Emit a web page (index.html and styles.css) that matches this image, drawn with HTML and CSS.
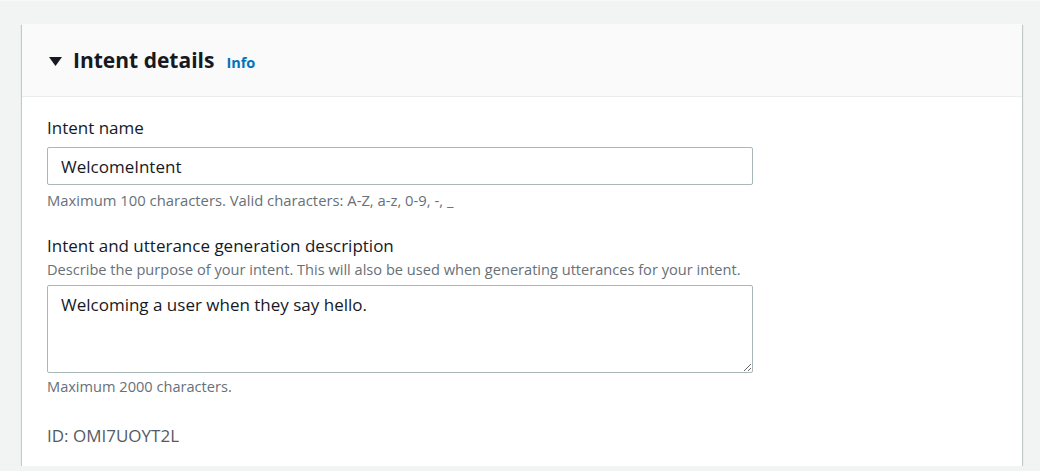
FILE: index.html
```html
<!DOCTYPE html>
<html lang="en">
<head>
<meta charset="utf-8">
<title>Intent details</title>
<link rel="stylesheet" href="styles.css">
</head>
<body>
<div class="page">
  <section class="card">
    <header class="card-header">
      <svg class="caret" width="13" height="10" viewBox="0 0 13 10"><polygon points="0,1 13,1 6.5,10" fill="#16191f"/></svg>
      <h2 class="title">Intent details</h2>
      <a class="info" href="#">Info</a>
    </header>
    <div class="card-body">
      <div class="field">
        <label class="label" for="name">Intent name</label>
        <input class="input" id="name" type="text" value="WelcomeIntent" readonly>
        <div class="hint hint-name">Maximum 100 characters. Valid characters: A-Z, a-z, 0-9, -, _</div>
      </div>
      <div class="field field-desc">
        <label class="label" for="desc">Intent and utterance generation description</label>
        <div class="desc">Describe the purpose of your intent. This will also be used when generating utterances for your intent.</div>
        <textarea class="textarea" id="desc" readonly>Welcoming a user when they say hello.</textarea>
        <div class="hint hint-desc">Maximum 2000 characters.</div>
      </div>
      <div class="id">ID: OMI7UOYT2L</div>
    </div>
  </section>
</div>
</body>
</html>
```

FILE: styles.css
```css
html, body {
  margin: 0;
  padding: 0;
  background: #f2f3f3;
  font-family: "Open Sans", "Noto Sans", sans-serif;
  color: #16191f;
}
.page {
  padding: 23px 18px 0 22px;
  border-top: 1px solid #f7f8f8;
}
.card {
  background: #fff;
  box-shadow: 0 1px 1px 0 rgba(0,28,36,.3), 1px 1px 1px 0 rgba(0,28,36,.15), -1px 1px 1px 0 rgba(0,28,36,.15);
}
.card-header {
  display: flex;
  align-items: center;
  height: 73px;
  box-sizing: border-box;
  padding: 0 26px 0 27px;
  background: #fafafa;
  border-bottom: 1px solid #eaeded;
}
.caret {
  margin-right: 11px;
  margin-top: 1px;
}
.title {
  margin: 0;
  font-size: 21px;
  font-weight: 700;
  line-height: 26px;
}
.info {
  margin-left: 12px;
  margin-top: 5px;
  font-size: 14.5px;
  font-weight: 700;
  color: #0073bb;
  text-decoration: none;
}
.card-body {
  padding: 20px 25px 19px;
}
.field {
  display: flex;
  flex-direction: column;
}
.field-desc {
  margin-top: 25px;
}
.label {
  font-size: 17px;
  line-height: 22px;
  color: #16191f;
}
.desc {
  margin-top: 3px;
  font-size: 14.6px;
  line-height: 18px;
  color: #687078;
}
.input {
  margin-top: 8px;
  width: 706px;
  height: 38px;
  box-sizing: border-box;
  border: 1px solid #aab7b8;
  border-radius: 2px;
  padding: 0 13px;
  font-family: inherit;
  font-size: 17px;
  color: #16191f;
  background: #fff;
  outline: none;
}
.textarea {
  margin-top: 7px;
  width: 706px;
  height: 88px;
  box-sizing: border-box;
  border: 1px solid #aab7b8;
  border-radius: 2px;
  padding: 8px 13px;
  font-family: inherit;
  font-size: 17px;
  line-height: 22px;
  color: #16191f;
  background: #fff;
  resize: vertical;
  outline: none;
}
.hint {
  font-size: 14.6px;
  line-height: 20px;
  color: #687078;
}
.hint-name {
  margin-top: 5px;
  font-size: 14.8px;
}
.hint-desc {
  margin-top: 3px;
}
.id {
  margin-top: 29px;
  font-size: 17px;
  line-height: 22px;
  color: #545b64;
}
```
